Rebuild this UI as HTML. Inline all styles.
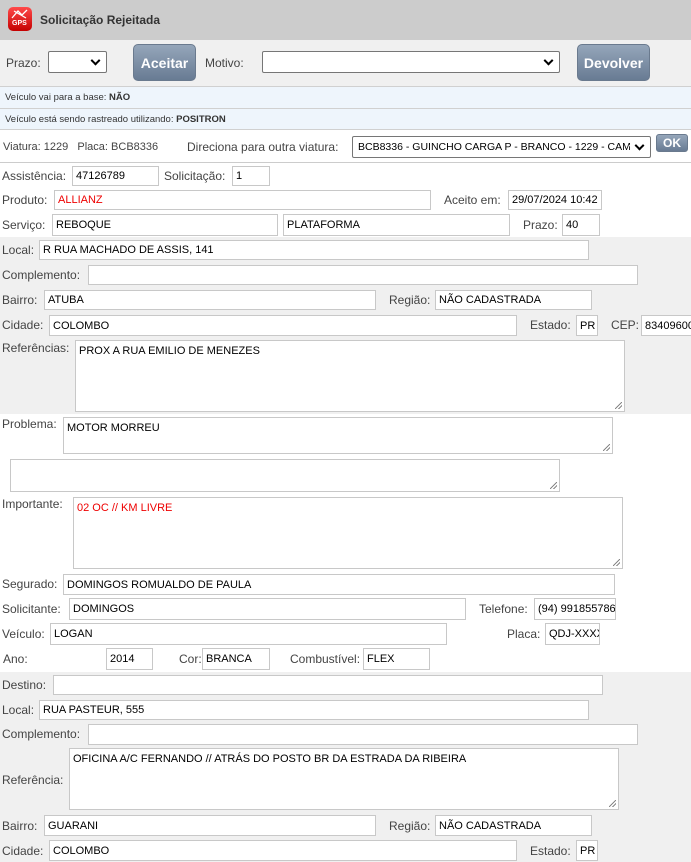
<!DOCTYPE html>
<html><head><meta charset="utf-8"><style>
*{box-sizing:border-box;margin:0;padding:0}
body{width:691px;height:862px;overflow:hidden;position:relative;background:#fff;font-family:"Liberation Sans",sans-serif;font-size:12px;color:#444}
.a{position:absolute;white-space:nowrap;margin-top:-3px;line-height:14px}
.n{margin-top:0}
.i{position:absolute;background:#fff;border:1px solid #c8c8c8;font-size:11px;color:#000;padding:0 3px;display:flex;align-items:center;overflow:hidden;white-space:nowrap}
.t{align-items:flex-start;padding-top:4px}
.t:after{content:"";position:absolute;right:2px;bottom:2px;width:7px;height:7px;background:linear-gradient(135deg,transparent 45%,#888 45%,#888 55%,transparent 55%,transparent 70%,#888 70%,#888 80%,transparent 80%)}
.s{position:absolute;background:#fff;border:1px solid #767676;border-radius:2px;font-size:10.5px;color:#000;padding-left:5px;display:flex;align-items:center;overflow:hidden;white-space:nowrap}
.s:after{content:"";position:absolute;right:7px;top:50%;width:5px;height:5px;border-right:2px solid #000;border-bottom:2px solid #000;transform:translateY(-70%) rotate(45deg);box-shadow:0 0 0 4px #fff}
.b{position:absolute;border-radius:5px;background:linear-gradient(#95a6ba,#687b93);border:1px solid #6a7a8e;color:#fff;font-weight:bold;font-size:14px;display:flex;align-items:center;justify-content:center}
.g{position:absolute;left:0;width:691px;background:#f0f0f0}
.bar{position:absolute;left:0;width:691px;background:#eef5fc;border-bottom:1px solid #d0d0d0;font-size:9.5px;color:#333;padding-left:5px;display:flex;align-items:center}
</style></head><body>
<div class="g" style="top:0;height:40px;background:#cccccc"></div>
<div class="a n" style="left:8px;top:7px;width:24px;height:24px;border-radius:5px;background:linear-gradient(#ff4a4a,#c40000)"></div>
<div class="a n" style="left:12px;top:20px;font-size:7px;font-weight:bold;color:#fff;line-height:8px">GPS</div>
<svg class="a n" style="left:10px;top:9px" width="20" height="10"><path d="M2 9 L8 2 L12 6 L17 1 M4 2 L16 9" stroke="#fff" stroke-width="1.3" fill="none"/></svg>
<div class="a n" style="left:40px;top:13px;font-weight:bold;color:#333;font-size:12px">Solicitação Rejeitada</div>
<div class="g" style="top:40px;height:46px"></div>
<div class="a" style="left:6px;top:59px">Prazo:</div>
<div class="s" style="left:48px;top:51px;width:59px;height:22px"></div>
<div class="b" style="left:133px;top:44px;width:63px;height:37px">Aceitar</div>
<div class="a" style="left:205px;top:59px">Motivo:</div>
<div class="s" style="left:262px;top:51px;width:298px;height:22px"></div>
<div class="b" style="left:577px;top:44px;width:73px;height:37px">Devolver</div>
<div class="bar" style="top:86px;height:23px;border-top:1px solid #d0d0d0">Veículo vai para a base:&nbsp;<b>NÃO</b></div>
<div class="bar" style="top:109px;height:21px">Veículo está sendo rastreado utilizando:&nbsp;<b>POSITRON</b></div>
<div class="a" style="left:3px;top:143px;font-size:11px">Viatura: 1229&nbsp;&nbsp; Placa: BCB8336</div>
<div class="a" style="left:187px;top:143px">Direciona para outra viatura:</div>
<div class="s" style="left:352px;top:136px;width:299px;height:22px">BCB8336 - GUINCHO CARGA P - BRANCO - 1229 - CAM</div>
<div class="b" style="left:656px;top:134px;width:32px;height:18px;font-size:12px;border-radius:3px">OK</div>
<div class="a n" style="left:0;top:162px;width:691px;height:1px;background:#ccc"></div>

<div class="a" style="left:2px;top:172px">Assistência:</div><div class="i" style="left:72px;top:166px;width:87px;height:20px">47126789</div>
<div class="a" style="left:164px;top:172px">Solicitação:</div><div class="i" style="left:232px;top:166px;width:38px;height:20px">1</div>
<div class="a" style="left:2px;top:196px">Produto:</div><div class="i" style="left:54px;top:190px;width:377px;height:20px;color:#e00">ALLIANZ</div>
<div class="a" style="left:444px;top:196px">Aceito em:</div><div class="i" style="left:508px;top:190px;width:94px;height:20px">29/07/2024 10:42</div>
<div class="a" style="left:2px;top:221px">Serviço:</div><div class="i" style="left:52px;top:214px;width:226px;height:22px">REBOQUE</div>
<div class="i" style="left:283px;top:214px;width:227px;height:22px">PLATAFORMA</div>
<div class="a" style="left:523px;top:221px">Prazo:</div><div class="i" style="left:562px;top:214px;width:38px;height:22px">40</div>

<div class="g" style="top:237px;height:177px"></div>
<div class="a" style="left:2px;top:246px">Local:</div><div class="i" style="left:39px;top:240px;width:550px;height:20px">R RUA MACHADO DE ASSIS, 141</div>
<div class="a" style="left:2px;top:271px">Complemento:</div><div class="i" style="left:88px;top:265px;width:550px;height:20px"></div>
<div class="a" style="left:2px;top:296px">Bairro:</div><div class="i" style="left:44px;top:290px;width:332px;height:20px">ATUBA</div>
<div class="a" style="left:389px;top:296px">Região:</div><div class="i" style="left:435px;top:290px;width:157px;height:20px">NÃO CADASTRADA</div>
<div class="a" style="left:2px;top:321px">Cidade:</div><div class="i" style="left:49px;top:315px;width:468px;height:21px">COLOMBO</div>
<div class="a" style="left:530px;top:321px">Estado:</div><div class="i" style="left:576px;top:315px;width:22px;height:21px">PR</div>
<div class="a" style="left:611px;top:321px">CEP:</div><div class="i" style="left:641px;top:315px;width:60px;height:21px">83409600</div>
<div class="a" style="left:2px;top:344px">Referências:</div><div class="i t" style="left:75px;top:340px;width:550px;height:72px">PROX A RUA EMILIO DE MENEZES</div>

<div class="a" style="left:2px;top:420px">Problema:</div><div class="i t" style="left:63px;top:417px;width:550px;height:37px">MOTOR MORREU</div>
<div class="i t" style="left:10px;top:459px;width:550px;height:33px"></div>
<div class="a" style="left:2px;top:500px">Importante:</div><div class="i t" style="left:73px;top:497px;width:550px;height:72px;color:#e00">02 OC // KM LIVRE</div>
<div class="a" style="left:2px;top:580px">Segurado:</div><div class="i" style="left:63px;top:574px;width:552px;height:21px">DOMINGOS ROMUALDO DE PAULA</div>
<div class="a" style="left:2px;top:605px">Solicitante:</div><div class="i" style="left:69px;top:598px;width:397px;height:22px">DOMINGOS</div>
<div class="a" style="left:479px;top:605px">Telefone:</div><div class="i" style="left:534px;top:598px;width:82px;height:22px">(94) 991855786</div>
<div class="a" style="left:2px;top:630px">Veículo:</div><div class="i" style="left:50px;top:623px;width:397px;height:22px">LOGAN</div>
<div class="a" style="left:507px;top:630px">Placa:</div><div class="i" style="left:545px;top:623px;width:55px;height:22px">QDJ-XXXX</div>
<div class="a" style="left:3px;top:655px">Ano:</div><div class="i" style="left:106px;top:648px;width:47px;height:22px">2014</div>
<div class="a" style="left:179px;top:655px">Cor:</div><div class="i" style="left:202px;top:648px;width:68px;height:22px">BRANCA</div>
<div class="a" style="left:290px;top:655px">Combustível:</div><div class="i" style="left:363px;top:648px;width:67px;height:22px">FLEX</div>

<div class="g" style="top:672px;height:190px"></div>
<div class="a" style="left:2px;top:681px">Destino:</div><div class="i" style="left:53px;top:675px;width:550px;height:20px"></div>
<div class="a" style="left:2px;top:706px">Local:</div><div class="i" style="left:39px;top:700px;width:550px;height:20px">RUA PASTEUR, 555</div>
<div class="a" style="left:2px;top:730px">Complemento:</div><div class="i" style="left:88px;top:724px;width:550px;height:21px"></div>
<div class="a" style="left:2px;top:776px">Referência:</div><div class="i t" style="left:69px;top:748px;width:550px;height:62px">OFICINA A/C FERNANDO // ATRÁS DO POSTO BR DA ESTRADA DA RIBEIRA</div>
<div class="a" style="left:2px;top:822px">Bairro:</div><div class="i" style="left:44px;top:815px;width:332px;height:21px">GUARANI</div>
<div class="a" style="left:389px;top:822px">Região:</div><div class="i" style="left:435px;top:815px;width:157px;height:21px">NÃO CADASTRADA</div>
<div class="a" style="left:2px;top:847px">Cidade:</div><div class="i" style="left:49px;top:840px;width:468px;height:21px">COLOMBO</div>
<div class="a" style="left:530px;top:847px">Estado:</div><div class="i" style="left:576px;top:840px;width:22px;height:21px">PR</div>
</body></html>
